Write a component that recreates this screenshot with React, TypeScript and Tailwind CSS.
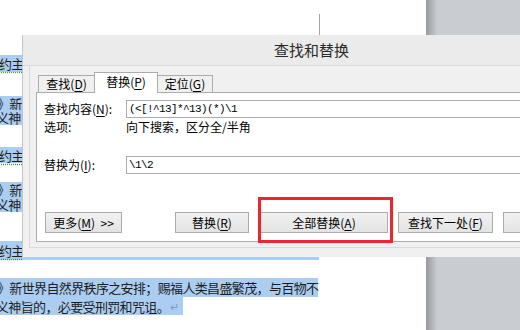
function Acc({ k }: { k: string }) {
  return (
    <>
      (<u className="underline underline-offset-2">{k}</u>)
    </>
  );
}

const hl = "flex h-full items-center whitespace-nowrap bg-[#abcdf1]";
const btn =
  "flex h-full shrink-0 items-center justify-center border border-[#acacac] bg-gradient-to-b from-[#f2f2f2] to-[#e3e3e3] text-[12px] text-black";

export default function App() {
  return (
    <div className="relative flex h-[330px] w-[520px] overflow-hidden bg-white font-['Noto_Sans_CJK_SC',sans-serif]">
      {/* document page */}
      <div className="w-[426px] shrink-0 bg-white text-[13px] leading-none tracking-[-0.64px] text-[#1d1d1d]">
        <div className="ml-[319px] mt-[14px] h-[21px] w-px bg-[#a5a5a5]" />

        <div className="mt-[20px] flex h-[17px]">
          <span className={`${hl} -ml-px`}>
            <span className="underline decoration-[#3d9b45] decoration-dotted underline-offset-[3px]">约主</span>
            耶和华说：我与你们立约，凡有血肉的不再被灭。
          </span>
        </div>

        <div className="mt-[24px] flex h-[14px]">
          <span className={`${hl} -ml-[3px]`}>》新世界自然界秩序之安排；赐福人类昌盛</span>
        </div>
        <div className="flex h-[15px]">
          <span className={`${hl} -ml-[4px]`}>义神旨的，必要受刑罚和咒诅。</span>
        </div>

        <div className="mt-[22px] flex h-[16px]">
          <span className={`${hl} -ml-px`}>
            <span className="underline decoration-[#3d9b45] decoration-dotted underline-offset-[3px]">约主</span>
            耶和华说：我与你们立约，凡有血肉的不再被灭。
          </span>
        </div>

        <div className="mt-[19px] flex h-[15px]">
          <span className={`${hl} -ml-[3px]`}>》新世界自然界秩序之安排；赐福人类昌盛</span>
        </div>
        <div className="flex h-[15px]">
          <span className={`${hl} -ml-[4px]`}>义神旨的，必要受刑罚和咒诅。</span>
        </div>

        <div className="mt-[29px] flex h-[19px]">
          <span className={`${hl} -ml-px w-[320px]`}>
            <span className="underline decoration-[#3d9b45] decoration-dotted underline-offset-[3px]">约主</span>
          </span>
        </div>

        <div className="mt-[18px] flex h-[19px]">
          <span className={`${hl} -ml-[3px]`}>》新世界自然界秩序之安排；赐福人类昌盛繁茂，与百物不</span>
        </div>
        <div className="flex h-[18px]">
          <span className={`${hl} -ml-[4px] pr-[5px]`}>
            义神旨的，必要受刑罚和咒诅。<span className="ml-[1px] text-[11px] text-[#7d9cbf]">↵</span>
          </span>
        </div>
      </div>

      {/* grey desk beside the page */}
      <div className="flex-1 bg-gradient-to-r from-[#97999c] via-[#c9ccd1] via-[12%] to-[#c9ccd1]" />

      {/* find & replace dialog */}
      <div className="absolute left-[22px] top-[35px] z-20 h-[222px] w-[560px] border-l border-[#c4c4c4] bg-[#f0f0f0] text-[12px] text-black">
        <div className="flex h-[31px] items-center border-b border-[#d9d9d9] bg-[#ebebeb] pl-[251px] text-[15px] text-[#2a2a2a]">
          查找和替换
        </div>
        <div className="pl-[6px]">
          <div className="border-b border-l border-[#dadada] pb-[5px] pl-[6px] pt-[6px]">
            <div className="flex h-[20px] items-start pl-[2px]">
              <div className="mt-[3px] flex h-[17px] w-[57px] shrink-0 items-center justify-center border border-b-0 border-[#acacac] bg-[#f0f0f0]">
                查找<Acc k="D" />
              </div>
              <div className="relative z-10 -ml-px flex h-[21px] w-[64px] shrink-0 items-center justify-center border border-b-0 border-[#acacac] bg-white pb-[2px]">
                替换<Acc k="P" />
              </div>
              <div className="-ml-px mt-[3px] flex h-[17px] w-[56px] shrink-0 items-center justify-center border border-b-0 border-[#acacac] bg-[#f0f0f0]">
                定位<Acc k="G" />
              </div>
            </div>

            <div className="h-[150px] w-[520px] border border-[#acacac] bg-white pl-[7px] pt-[7px]">
              <div className="flex h-[18px] items-center">
                <div className="w-[82px] shrink-0 whitespace-nowrap">
                  查找内容<Acc k="N" />:
                </div>
                <div className="flex h-full w-[420px] shrink-0 items-center border border-[#a9abb0] pl-[2px] font-['Liberation_Mono',monospace] text-[11px] tracking-[-0.6px]">
                  {"(<[!^13]*^13)(*)\\1"}
                </div>
              </div>
              <div className="flex h-[18px] items-center">
                <div className="w-[82px] shrink-0">选项:</div>
                <div className="whitespace-nowrap">向下搜索，区分全/半角</div>
              </div>
              <div className="mt-[20px] flex h-[18px] items-center">
                <div className="w-[82px] shrink-0 whitespace-nowrap">
                  替换为<Acc k="I" />:
                </div>
                <div className="flex h-full w-[420px] shrink-0 items-center border border-[#a9abb0] pl-[2px] font-['Liberation_Mono',monospace] text-[11px] tracking-[-0.6px]">
                  {"\\1\\2"}
                </div>
              </div>

              <div className="mt-[38px] flex h-[21px] pl-px">
                <div className={`${btn} w-[77px]`}>
                  更多<Acc k="M" />&nbsp;&nbsp;&gt;&gt;
                </div>
                <div className={`${btn} ml-[53px] w-[74px]`}>
                  替换<Acc k="R" />
                </div>
                <div className={`${btn} ml-[11px] w-[128px]`}>
                  全部替换<Acc k="A" />
                </div>
                <div className={`${btn} ml-[10px] w-[95px] border-[#3d9be9]`}>
                  查找下一处<Acc k="F" />
                </div>
                <div className={`${btn} ml-[10px] w-[80px]`}>取消</div>
              </div>
            </div>
          </div>
        </div>
      </div>

      {/* red annotation box */}
      <div className="absolute left-[258px] top-[197px] z-30 h-[46px] w-[135px] border-[3px] border-[#ec2530]" />
    </div>
  );
}
